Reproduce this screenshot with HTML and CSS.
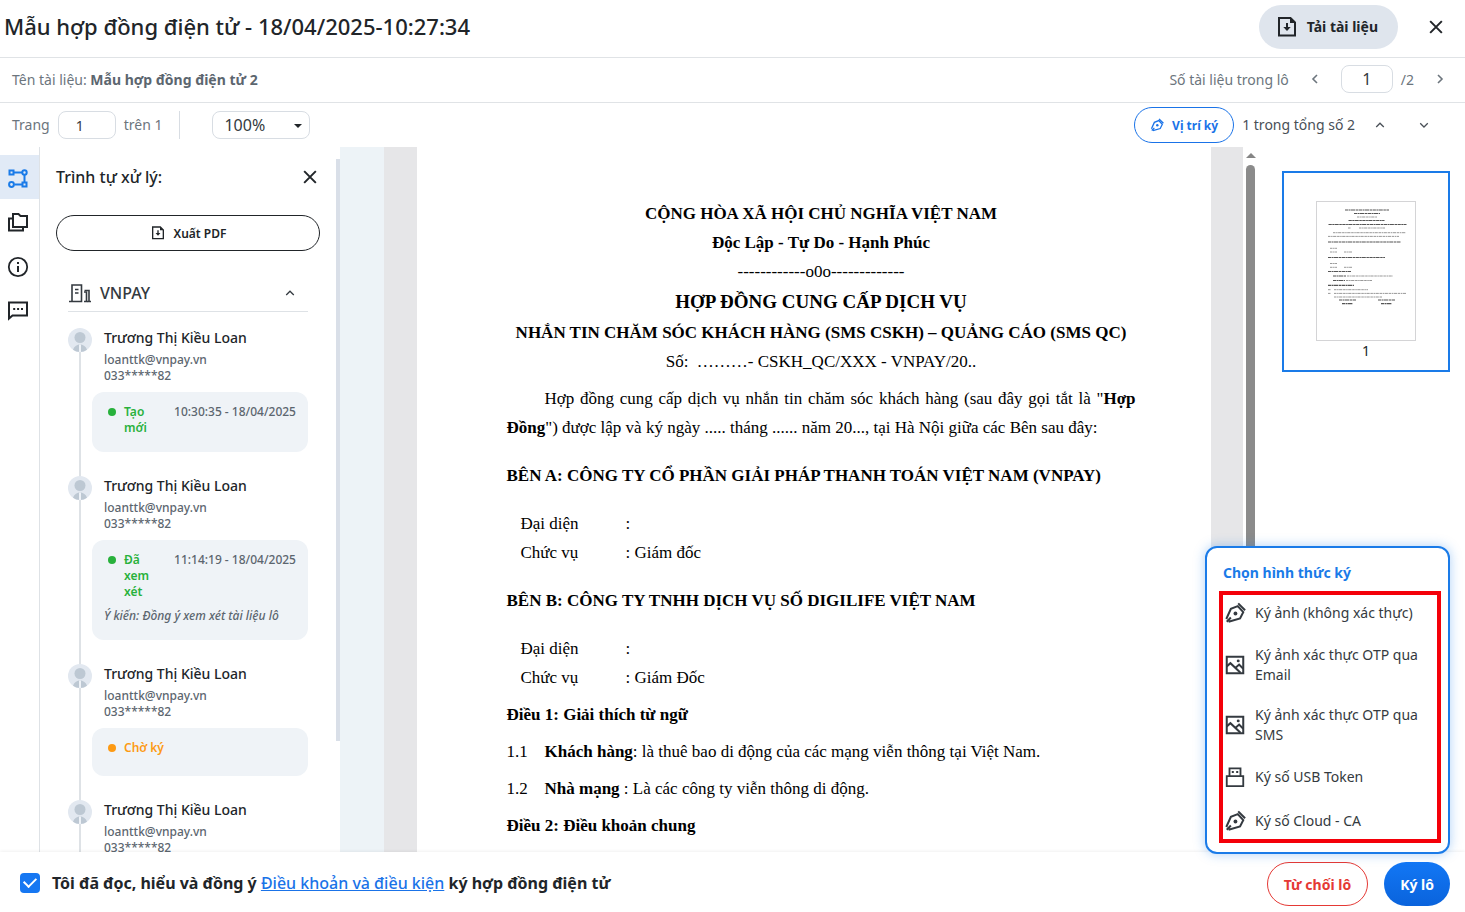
FILE: index.html
```html
<!DOCTYPE html>
<html lang="vi">
<head>
<meta charset="utf-8">
<meta name="viewport" content="width=device-width, initial-scale=1">
<title>Mẫu hợp đồng điện tử</title>
<link rel="stylesheet" href="styles.css">
</head>
<body>
<svg class="sprite" aria-hidden="true">
  <symbol id="i-close" viewBox="0 0 24 24"><path d="M5 5l14 14M19 5L5 19" fill="none" stroke="currentColor" stroke-width="2.4"/></symbol>
  <symbol id="i-file" viewBox="0 0 24 24"><path d="M4 3h11.500l4.500 4.500v13H4z" fill="none" stroke="currentColor" stroke-width="2"/><path d="M15 3v5h5.500z" fill="currentColor"/><path d="M12 8v5" fill="none" stroke="currentColor" stroke-width="2"/><path d="M8.300 12h7.400L12 16z" fill="currentColor"/></symbol>
  <symbol id="i-left" viewBox="0 0 24 24"><path d="M15 6l-6 6 6 6" fill="none" stroke="currentColor" stroke-width="2.400"/></symbol>
  <symbol id="i-right" viewBox="0 0 24 24"><path d="M9 6l6 6-6 6" fill="none" stroke="currentColor" stroke-width="2.400"/></symbol>
  <symbol id="i-up" viewBox="0 0 24 24"><path d="M5.500 15.500L12 9l6.500 6.500" fill="none" stroke="currentColor" stroke-width="2.200"/></symbol>
  <symbol id="i-down" viewBox="0 0 24 24"><path d="M5.500 9l6.500 6.500L18.500 9" fill="none" stroke="currentColor" stroke-width="2.200"/></symbol>
  <symbol id="i-pen" viewBox="0 0 24 24"><g fill="none" stroke="currentColor" stroke-width="2.200"><path d="M2.500 18.500L7.500 7.500l7.500-3 6 6.500-3.500 7-12.500 3.500M3 21.500l4.500-4.500M15.500 1.500l7.500 7.500"/></g><circle cx="12.500" cy="12.500" r="2.100" fill="currentColor"/></symbol>
  <symbol id="i-image" viewBox="0 0 24 24"><g fill="none" stroke="currentColor" stroke-width="2.200"><path d="M3 3h18v18H3z"/><path d="M3 13.500l4-3.500 11 10.500M12 15.500l4.500-4 4.500 4.500"/></g><circle cx="15.500" cy="7.500" r="1.600" fill="currentColor"/></symbol>
  <symbol id="i-usb" viewBox="0 0 24 24"><path d="M3 11h18v11H3zM6 11V2.500h12V11" fill="none" stroke="currentColor" stroke-width="2"/><path d="M8.500 5.500h2.200v2.200H8.500zM13.300 5.500h2.200v2.200h-2.200z" fill="currentColor"/></symbol>
  <symbol id="i-flow" viewBox="0 0 24 24"><g fill="none" stroke="currentColor" stroke-width="2"><path d="M3.500 3.500h4v4h-4zM16.500 15.500h4v4h-4z"/><path d="M8 5.500h8.500M18.500 8v7M8.500 17.500H16"/><circle cx="5.500" cy="17.500" r="2.400"/><circle cx="18.500" cy="5.500" r="2.200"/></g></symbol>
  <symbol id="i-folders" viewBox="0 0 24 24"><path d="M7 3h5.500l2 2H21v11H7zM7 7.500H3v12h14V16" fill="none" stroke="currentColor" stroke-width="2"/></symbol>
  <symbol id="i-info" viewBox="0 0 24 24"><circle cx="12" cy="12" r="9.200" fill="none" stroke="currentColor" stroke-width="1.800"/><path d="M11 7h2v2h-2zM11 11h2v6h-2z" fill="currentColor"/></symbol>
  <symbol id="i-chat" viewBox="0 0 24 24"><path d="M3 3.500h18v13H6.500L3 19.500z" fill="none" stroke="currentColor" stroke-width="2"/><path d="M7.200 9h2v2h-2zM11.100 9h2v2h-2zM15 9h2v2h-2z" fill="currentColor"/></symbol>
  <symbol id="i-building" viewBox="0 0 24 24"><g fill="none" stroke="currentColor" stroke-width="1.600"><path d="M1 20.500h12.500V4H4v16.500M19 20.500h4M16.500 9.500H21v11"/><path d="M7 8.500h3.500M7 12h3.500"/><path d="M16 11h2.500v9.500H16"/></g></symbol>
  <symbol id="i-user" viewBox="0 0 24 24"><circle cx="12" cy="12" r="12" fill="#e2e8f0"/><circle cx="12" cy="9.500" r="5.500" fill="#bdc8d3"/><path d="M5 21.800C6 18.500 9 16.800 11 16.500h2c2 .3 5 2 6 5.300A12 12 0 0 1 12 24a12 12 0 0 1-7-2.200z" fill="#bdc8d3"/><path d="M11 16.500h2v7.400h-2z" fill="#eef2f7"/></symbol>
</svg>

<div class="app">
  <header class="topbar">
    <h1 class="title">Mẫu hợp đồng điện tử - 18/04/2025-10:27:34</h1>
    <button class="download" type="button"><svg class="ic24"><use href="#i-file"/></svg>Tải tài liệu</button>
    <button class="icon-btn close-main" type="button" aria-label="Đóng"><svg class="ic20"><use href="#i-close"/></svg></button>
  </header>

  <div class="subbar">
    <p class="doc-name">Tên tài liệu: <strong>Mẫu hợp đồng điện tử 2</strong></p>
    <div class="batch">
      <label for="batch">Số tài liệu trong lô</label>
      <button class="icon-btn batch-prev" type="button" aria-label="Tài liệu trước"><svg class="ic16"><use href="#i-left"/></svg></button>
      <input class="field batch-field" id="batch" type="text" value="1">
      <span class="batch-total">/2</span>
      <button class="icon-btn batch-next" type="button" aria-label="Tài liệu sau"><svg class="ic16"><use href="#i-right"/></svg></button>
    </div>
  </div>

  <div class="toolbar">
    <label for="page">Trang</label>
    <input class="field page-field" id="page" type="text" value="1">
    <span>trên 1</span>
    <span class="divider"></span>
    <span class="zoom">
      <select class="field zoom-field" aria-label="Thu phóng"><option>100%</option></select>
      <span class="caret"></span>
    </span>
    <div class="sign-nav">
      <button class="sign-pos" type="button"><svg class="ic14"><use href="#i-pen"/></svg>Vị trí ký</button>
      <span class="sign-count">1 trong tổng số 2</span>
      <button class="icon-btn nav-up" type="button" aria-label="Vị trí trước"><svg class="ic14"><use href="#i-up"/></svg></button>
      <button class="icon-btn nav-down" type="button" aria-label="Vị trí sau"><svg class="ic14"><use href="#i-down"/></svg></button>
    </div>
  </div>

  <main class="work">
    <nav class="rail">
      <button class="rail-btn active" type="button" aria-label="Trình tự xử lý"><svg class="ic24"><use href="#i-flow"/></svg></button>
      <button class="rail-btn" type="button" aria-label="Tài liệu"><svg class="ic24"><use href="#i-folders"/></svg></button>
      <button class="rail-btn" type="button" aria-label="Thông tin"><svg class="ic24"><use href="#i-info"/></svg></button>
      <button class="rail-btn" type="button" aria-label="Bình luận"><svg class="ic24"><use href="#i-chat"/></svg></button>
    </nav>

    <aside class="steps">
      <div class="steps-body">
        <div class="steps-head">
          <h2>Trình tự xử lý:</h2>
          <button class="icon-btn" type="button" aria-label="Đóng"><svg class="ic20"><use href="#i-close"/></svg></button>
        </div>
        <button class="export" type="button"><svg class="ic16"><use href="#i-file"/></svg>Xuất PDF</button>
        <section class="org">
          <button class="org-head" type="button"><svg class="ic24"><use href="#i-building"/></svg><span>VNPAY</span><svg class="ic14"><use href="#i-up"/></svg></button>
          <ol class="timeline">
            <li class="step">
              <svg class="avatar"><use href="#i-user"/></svg>
              <div class="who"><h3>Trương Thị Kiều Loan</h3><p>loanttk@vnpay.vn</p><p>033*****82</p></div>
              <div class="card"><div class="row"><span class="status done">Tạo mới</span><time>10:30:35 - 18/04/2025</time></div></div>
            </li>
            <li class="step">
              <svg class="avatar"><use href="#i-user"/></svg>
              <div class="who"><h3>Trương Thị Kiều Loan</h3><p>loanttk@vnpay.vn</p><p>033*****82</p></div>
              <div class="card"><div class="row"><span class="status done">Đã xem xét</span><time>11:14:19 - 18/04/2025</time></div><p class="note">Ý kiến: Đồng ý xem xét tài liệu lô</p></div>
            </li>
            <li class="step">
              <svg class="avatar"><use href="#i-user"/></svg>
              <div class="who"><h3>Trương Thị Kiều Loan</h3><p>loanttk@vnpay.vn</p><p>033*****82</p></div>
              <div class="card"><div class="row"><span class="status waiting">Chờ ký</span></div></div>
            </li>
            <li class="step">
              <svg class="avatar"><use href="#i-user"/></svg>
              <div class="who"><h3>Trương Thị Kiều Loan</h3><p>loanttk@vnpay.vn</p><p>033*****82</p></div>
            </li>
          </ol>
        </section>
      </div>
      <div class="steps-scroll"><span></span></div>
    </aside>

    <section class="viewer">
      <article class="page">
        <div class="doc-top">
          <p><b>CỘNG HÒA XÃ HỘI CHỦ NGHĨA VIỆT NAM</b></p>
          <p><b>Độc Lập - Tự Do - Hạnh Phúc</b></p>
          <p>------------o0o-------------</p>
          <p class="doc-title"><b>HỢP ĐỒNG CUNG CẤP DỊCH VỤ</b></p>
          <p><b>NHẮN TIN CHĂM SÓC KHÁCH HÀNG (SMS CSKH) – QUẢNG CÁO (SMS QC)</b></p>
          <p>Số: &nbsp;………- CSKH_QC/XXX - VNPAY/20..</p>
        </div>
        <p class="intro">Hợp đồng cung cấp dịch vụ nhắn tin chăm sóc khách hàng (sau đây gọi tắt là "<b>Hợp</b> <b>Đồng</b>") được lập và ký ngày ..... tháng ...... năm 20..., tại Hà Nội giữa các Bên sau đây:</p>
        <p class="party"><b>BÊN A: CÔNG TY CỔ PHẦN GIẢI PHÁP THANH TOÁN VIỆT NAM (VNPAY)</b></p>
        <dl class="rep"><dt>Đại diện</dt><dd>:</dd><dt>Chức vụ</dt><dd>: Giám đốc</dd></dl>
        <p class="party"><b>BÊN B: CÔNG TY TNHH DỊCH VỤ SỐ DIGILIFE VIỆT NAM</b></p>
        <dl class="rep"><dt>Đại diện</dt><dd>:</dd><dt>Chức vụ</dt><dd>: Giám Đốc</dd></dl>
        <p class="clause"><b>Điều 1: Giải thích từ ngữ</b></p>
        <p class="clause item"><span>1.1</span><span><b>Khách hàng</b>: là thuê bao di động của các mạng viễn thông tại Việt Nam.</span></p>
        <p class="clause item"><span>1.2</span><span><b>Nhà mạng</b> : Là các công ty viễn thông di động.</span></p>
        <p class="clause"><b>Điều 2: Điều khoản chung</b></p>
      </article>
      <div class="view-scroll"><span class="arrow-up"></span><span class="thumb"></span></div>
    </section>

    <aside class="pages">
      <button class="page-thumb" type="button">
        <svg class="mini" viewBox="0 0 100 140" aria-hidden="true">
          <rect x=".5" y=".5" width="99" height="139" fill="#fff" stroke="#d4d4d6"/>
          <g fill="none" stroke="#555" stroke-width="1.200" stroke-dasharray="3.300 .5 1.800 .4 4.200 .6 2.500 .5">
            <path d="M29 9h44M38 12.500h26M32.500 19.500h36M12.500 23.500h78M12 41h73M12 56.500h57M12 70.500h23M17 75h13M17 79.500h12M12 84.300h26"/>
            <path d="M23 99h17M62 99h17M26 102.700h11M65 102.700h11"/>
          </g>
          <g fill="none" stroke="#999" stroke-width="1" stroke-dasharray="2.500 .6 1.500 .5 3.300 .7">
            <path d="M41 16h20M32 27h3M43 27h26M17 31.700h73M12 35.400h71M14 47.300h7M14 51h7M28 51h8M14 62.500h7M14 66.300h7M28 66.300h8M31 75h46M30 79.500h26M12 88.700h3M18 88.700h34M12 92.400h3M18 92.400h72M18 96h48"/>
          </g>
        </svg>
        <span>1</span>
      </button>
    </aside>
  </main>

  <footer class="footer">
    <div class="agree"><input type="checkbox" id="agree" checked><label for="agree">Tôi đã đọc, hiểu và đồng ý <a href="#terms">Điều khoản và điều kiện</a> ký hợp đồng điện tử</label></div>
    <button class="reject" type="button">Từ chối lô</button>
    <button class="sign" type="button">Ký lô</button>
    <div class="sign-menu">
      <h2>Chọn hình thức ký</h2>
      <div class="options">
        <button type="button"><svg class="ic22"><use href="#i-pen"/></svg><span>Ký ảnh (không xác thực)</span></button>
        <button type="button"><svg class="ic22"><use href="#i-image"/></svg><span>Ký ảnh xác thực OTP qua Email</span></button>
        <button type="button"><svg class="ic22"><use href="#i-image"/></svg><span>Ký ảnh xác thực OTP qua SMS</span></button>
        <button type="button"><svg class="ic22"><use href="#i-usb"/></svg><span>Ký số USB Token</span></button>
        <button type="button"><svg class="ic22"><use href="#i-pen"/></svg><span>Ký số Cloud - CA</span></button>
      </div>
    </div>
  </footer>
</div>
</body>
</html>
```

FILE: styles.css
```css
* { box-sizing: border-box; }
body { margin: 0; font-family: "Noto Sans", "Open Sans", sans-serif; font-size: 14px; color: #212529; background: #fff; }
h1, h2, h3, p, ol, dl, dd { margin: 0; padding: 0; }
button, input, select { font: inherit; color: inherit; }
button { background: none; border: 0; padding: 0; display: flex; align-items: center; cursor: pointer; }
svg { flex: none; display: block; }
.sprite { position: absolute; width: 0; height: 0; }
.ic24 { width: 24px; height: 24px; }
.ic22 { width: 22px; height: 22px; }
.ic20 { width: 20px; height: 20px; }
.ic16 { width: 16px; height: 16px; }
.ic14 { width: 14px; height: 14px; }

.app { height: 100vh; display: flex; flex-direction: column; overflow: hidden; }

.topbar { flex: none; height: 58px; padding: 0 19px 4px 4px; display: flex; align-items: center; border-bottom: 1px solid #e0e3e6; }
.title { flex: 1; padding-bottom: 2px; font-size: 22px; line-height: 32px; font-weight: 500; }
.download { height: 44px; padding: 0 20px 0 16px; gap: 8px; border-radius: 22px; background: #dfe5ed; font-weight: 700; }
.close-main { margin-left: 28px; }

.subbar { flex: none; height: 45px; padding: 0 17px 2px 12px; display: flex; align-items: center; justify-content: space-between; color: #6c757d; border-bottom: 1px solid #e0e3e6; }
.doc-name strong { color: #5c666f; font-weight: 700; }
.batch { display: flex; align-items: center; }
.batch-prev { margin: 0 18px; }
.batch-total { margin: 0 18px 0 8px; }
.field { height: 28px; padding: 0; border: 1px solid #d8dde3; border-radius: 8px; background: #fff; color: #343a40; outline: 0; }
.batch-field { width: 52px; font-size: 16px; text-align: center; }

.toolbar { flex: none; height: 44px; padding: 0 34px 0 12px; display: flex; align-items: center; gap: 8px; color: #6c757d; }
.toolbar label, .toolbar > span, .sign-count { padding-bottom: 1px; }
.page-field { width: 58px; padding-right: 14px; text-align: center; }
.divider { height: 28px; border-left: 1px solid #d8dde3; margin: 0 24px 0 9px; }
.zoom { position: relative; }
.zoom-field { width: 98px; padding: 0 11px; font-size: 16px; appearance: none; }
.caret { position: absolute; right: 8px; top: 13px; border: 4px solid transparent; border-top-color: #212529; border-bottom: 0; pointer-events: none; }
.sign-nav { margin-left: auto; display: flex; align-items: center; color: #495057; }
.sign-pos { height: 36px; padding: 0 15px; gap: 8px; border: 1px solid #1a73e8; border-radius: 18px; color: #1a73e8; font-size: 12px; font-weight: 700; }
.sign-count { margin-left: 8px; }
.nav-up { margin: 0 30px 0 18px; }

.work { flex: 1; min-height: 0; display: flex; }
.rail { flex: none; width: 40px; padding-top: 8px; border-right: 1px solid #dee2e6; }
.rail-btn { width: 100%; height: 44px; padding: 4px 0 0 6px; }
.rail-btn.active { background: #e1eaf6; color: #1a7be8; }

.steps { flex: none; width: 300px; display: flex; overflow: hidden; }
.steps-body { flex: 1; padding: 18px 16px 0; }
.steps-head { display: flex; justify-content: space-between; align-items: center; height: 24px; }
.steps-head h2 { font-size: 16px; line-height: 24px; font-weight: 500; }
.export { width: 100%; height: 36px; margin-top: 26px; justify-content: center; gap: 8px; border: 1px solid #212529; border-radius: 18px; font-size: 12px; font-weight: 600; }
.org { padding: 24px 12px 0; }
.org-head { width: 100%; height: 37px; padding-right: 11px; gap: 8px; border-bottom: 1px solid #dee2e6; font-size: 16px; font-weight: 500; color: #343a40; }
.org-head span { flex: 1; text-align: left; }
.timeline { list-style: none; padding-top: 16px; }
.step { display: grid; grid-template-columns: 24px 1fr; padding-bottom: 24px; background: linear-gradient(#dee2e6, #dee2e6) 11px 0 / 2px 100% no-repeat; }
.avatar { width: 24px; height: 24px; }
.who { padding-left: 12px; color: #5c666f; font-size: 12px; line-height: 16px; font-weight: 500; }
.who h3 { font-size: 14px; line-height: 20px; margin-bottom: 4px; font-weight: 500; color: #212529; }
.card { grid-column: 2; min-height: 48px; margin-top: 8px; padding: 12px 12px 16px; border-radius: 12px; background: #eff3f7; font-size: 12px; line-height: 16px; }
.row { display: flex; justify-content: space-between; gap: 18px; color: #5c666f; font-weight: 500; }
.row time { white-space: nowrap; }
.status { position: relative; padding-left: 20px; font-weight: 600; }
.status::before { content: ""; position: absolute; left: 4px; top: 4px; width: 8px; height: 8px; border-radius: 50%; background: currentColor; }
.done { color: #28b13c; }
.waiting { color: #fd9a14; }
.note { margin-top: 8px; font-style: italic; font-weight: 500; color: #5c666f; white-space: nowrap; }
.steps-scroll { width: 4px; padding-top: 12px; }
.steps-scroll span { display: block; height: 84%; background: #d9dfe8; }

.viewer { flex: 1; min-width: 0; display: flex; justify-content: center; background: #e6e6e8; border-left: 44px solid #edf3f7; }
.page { width: 794px; margin: 0 auto; padding: 52px 75px 0 90px; background: #fff; color: #000; font-family: "Liberation Serif", serif; font-size: 17px; line-height: 29px; overflow: hidden; }
.doc-top { text-align: center; white-space: nowrap; }
.doc-title { font-size: 19px; line-height: 32px; }
.intro { margin-top: 8px; text-indent: 38px; text-align: justify; }
.party { margin-top: 19px; white-space: nowrap; }
.rep { margin: 19px 0 0 14px; display: grid; grid-template-columns: 105px 1fr; }
.clause { margin-top: 8px; }
.item { display: flex; }
.item span:first-child { width: 38px; }
.view-scroll { flex: none; width: 15px; padding-top: 6px; background: #fff; display: flex; flex-direction: column; align-items: center; gap: 7px; }
.arrow-up { border: 5px solid transparent; border-top: 0; border-bottom-color: #858585; }
.thumb { width: 9px; height: 85%; border-radius: 5px; background: #8b8b8b; }

.pages { flex: none; width: 207px; padding: 24px 15px 0 24px; }
.page-thumb { width: 100%; height: 201px; padding-top: 18px; border: 2px solid #1a7be8; flex-direction: column; justify-content: center; line-height: 20px; }
.mini { width: 100px; height: 140px; }

.footer { position: relative; flex: none; height: 60px; padding: 4px 15px 0 20px; display: flex; align-items: center; gap: 16px; background: #fff; box-shadow: 0 -1px 3px rgba(0,0,0,.06); }
.agree { flex: 1; padding-bottom: 2px; display: flex; align-items: center; gap: 12px; font-size: 16px; font-weight: 700; }
.agree input { appearance: none; width: 20px; height: 20px; margin: 0; border-radius: 4px; background: #1677f2; display: grid; place-items: center; }
.agree input::after { content: ""; width: 10px; height: 6px; margin-bottom: 4px; border: solid #fff; border-width: 0 0 2px 2px; transform: rotate(-45deg); }
.agree a { color: #1a73e8; font-weight: 500; }
.reject, .sign { height: 44px; padding: 0 16px; border-radius: 22px; font-weight: 700; }
.reject { border: 1px solid #e53935; color: #e53935; }
.sign { background: linear-gradient(#1277f5, #0a63dc); color: #fff; }

.sign-menu { position: absolute; right: 15px; bottom: 58px; width: 245px; padding: 10px 7px 9px 12px; border: 2px solid #1a7be8; border-radius: 12px; background: #fff; box-shadow: 0 0 12px rgba(26,123,232,.35); }
.sign-menu h2 { padding-left: 4px; font-size: 14px; line-height: 30px; font-weight: 700; color: #1a7be8; }
.options { margin-top: 3px; padding: 0 8px 0 5px; outline: 4px solid #f40009; outline-offset: -4px; }
.options button { width: 100%; padding: 10px 0; min-height: 44px; gap: 9px; text-align: left; line-height: 20px; color: #343a40; }
```
